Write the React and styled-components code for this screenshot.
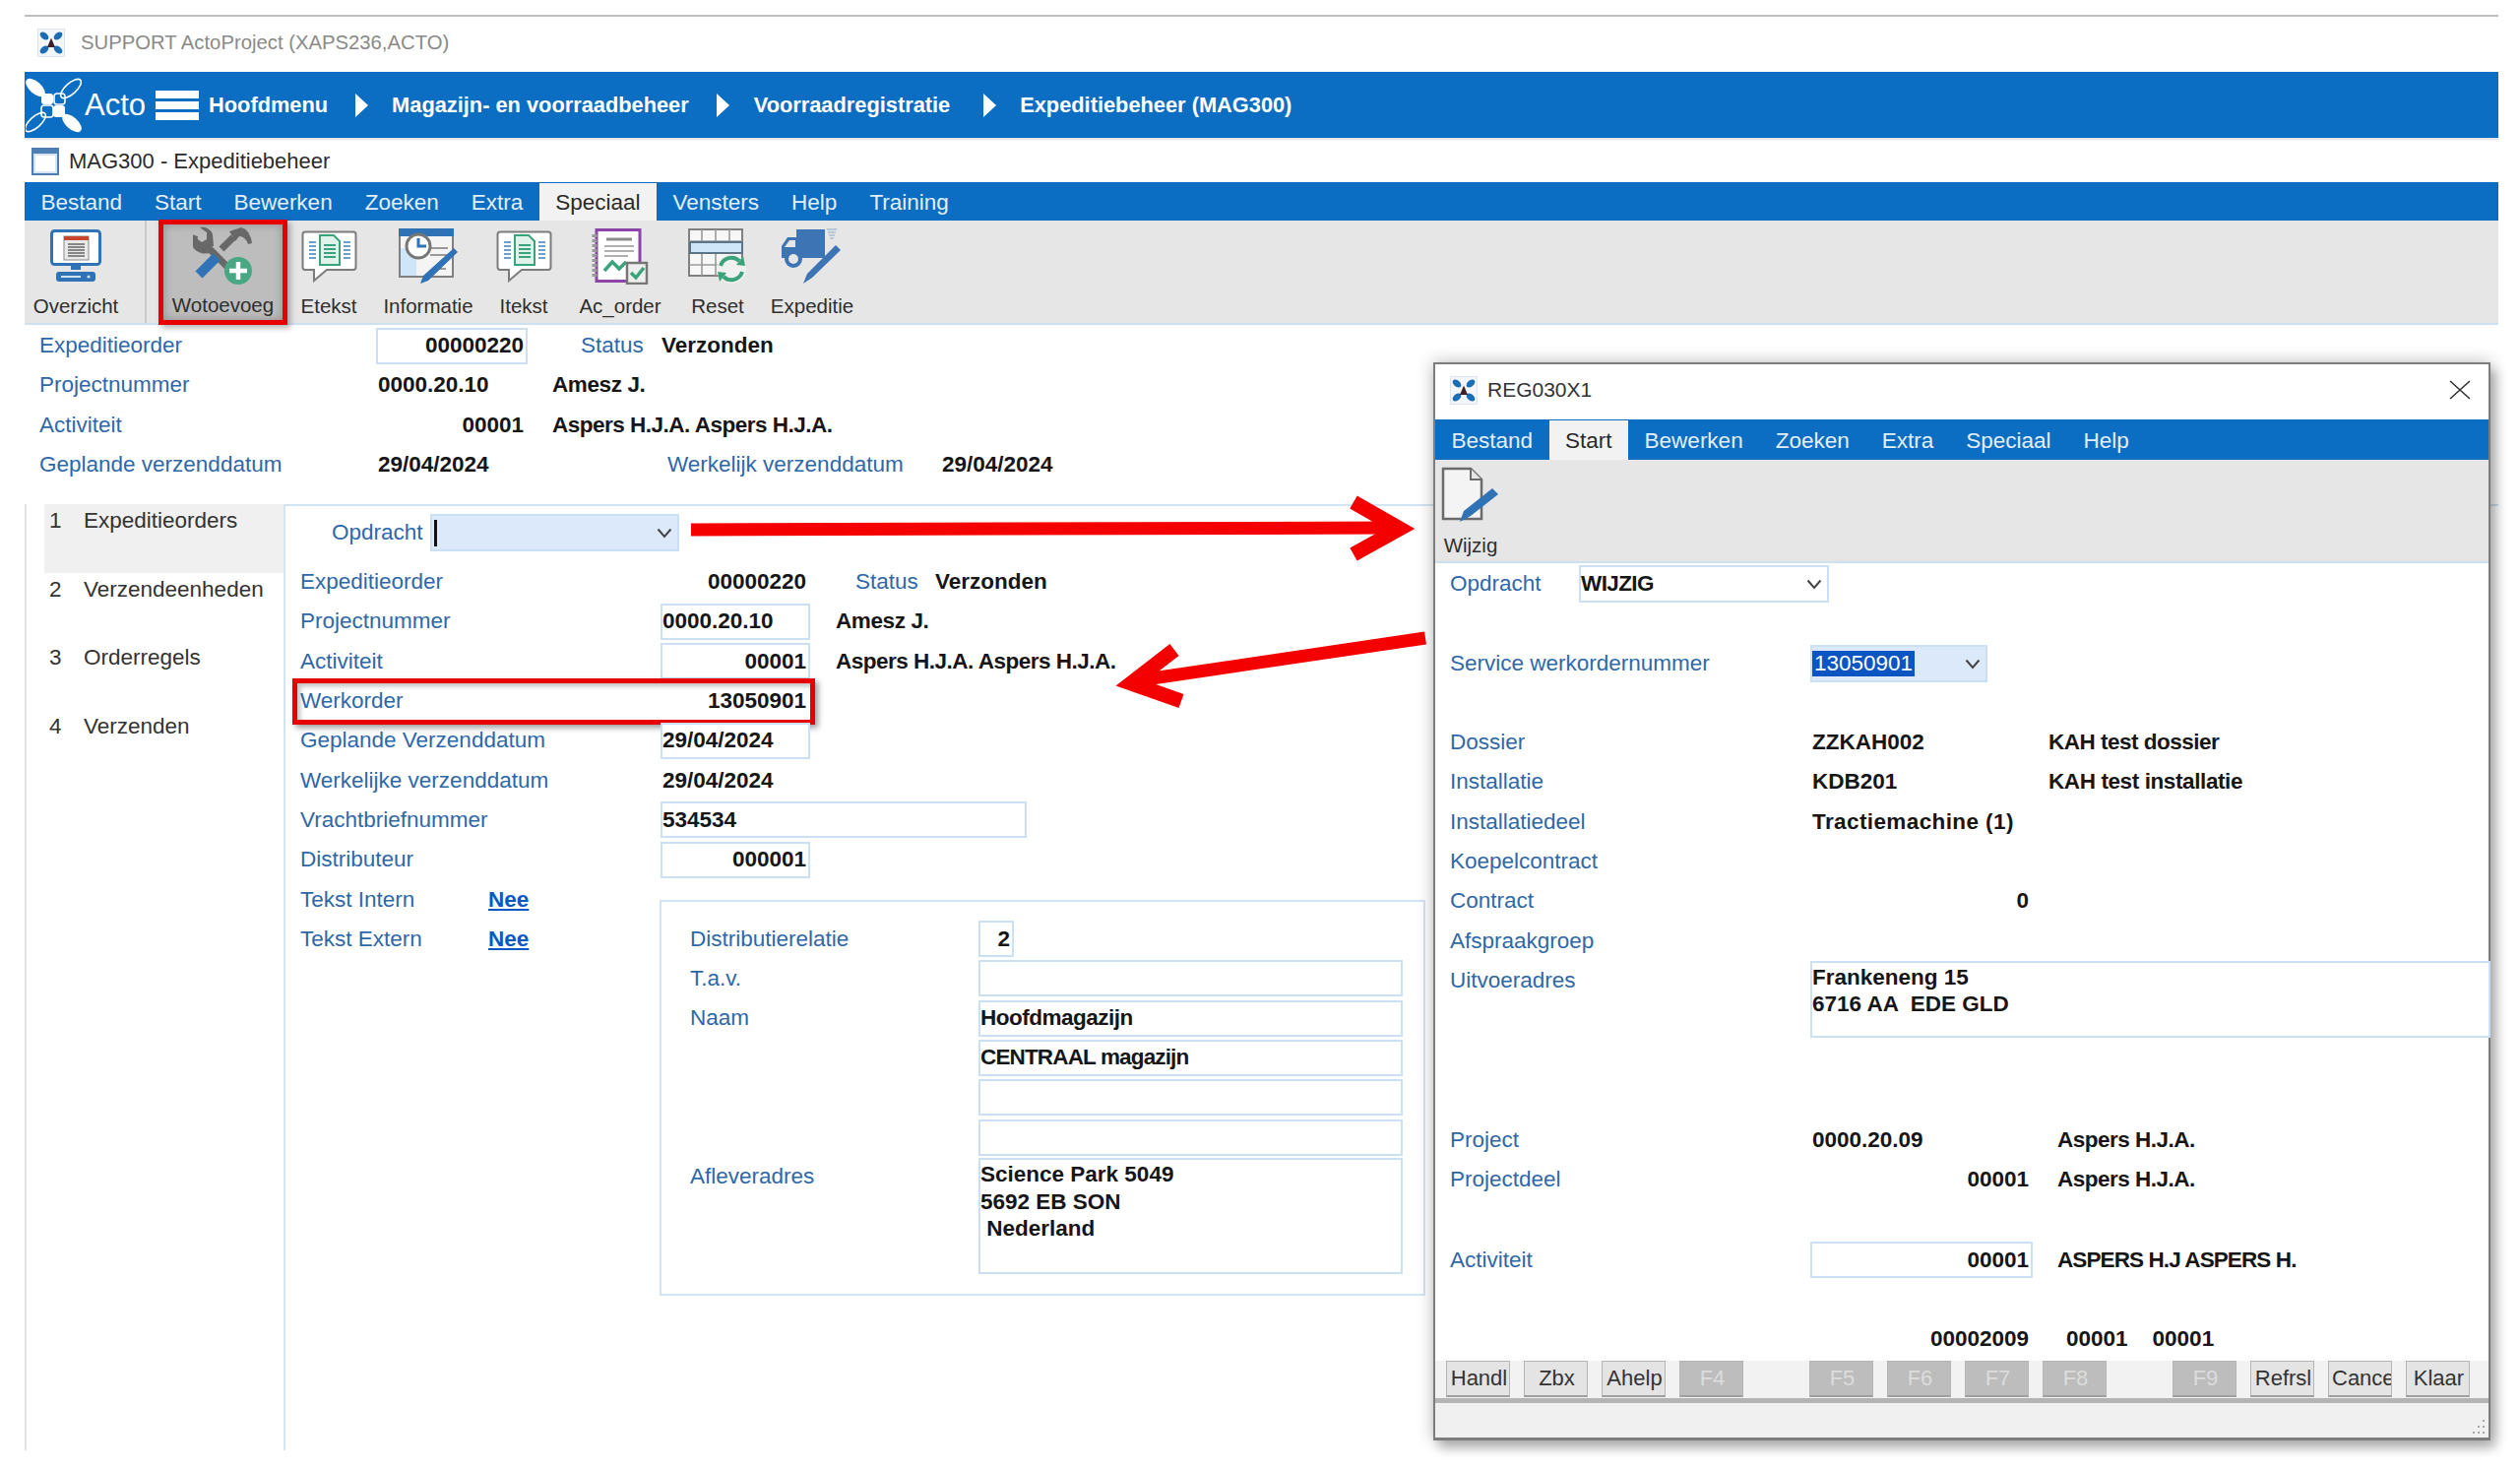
import React from "react";
import styled, { createGlobalStyle } from "styled-components";

const GlobalStyle = createGlobalStyle`
  html, body { margin: 0; padding: 0; background: #fff; }
  body { font-family: "Liberation Sans", Arial, sans-serif; }
  * { box-sizing: border-box; }
`;

const BLUE = "#0b6ec2";
const LABEL = "#2f68a8";
const FIELD_BORDER = "#cbe0f2";

/* ---------- page chrome ---------- */
const Page = styled.div`
  position: relative;
  width: 2560px;
  height: 1493px;
  padding: 15px 22px 0 25px;
  overflow: hidden;
`;

const AppTitle = styled.div`
  display: flex;
  align-items: center;
  gap: 16px;
  height: 58px;
  padding: 0 0 4px 13px;
  border-top: 2px solid #bdbdbd;
  color: #8a8a8a;
  font-size: 20.3px;
`;

const NavBar = styled.div`
  display: flex;
  align-items: center;
  height: 67px;
  background: ${BLUE};
  box-shadow: 0 2px 2px rgba(0, 0, 0, 0.12);
  color: #fff;
`;

const LogoWord = styled.span`
  margin: 0 10px 0 3px;
  font-size: 31px;
`;

const Crumb = styled.span`
  margin-left: ${(p) => p.$ml || 0}px;
  font-size: 21.8px;
  font-weight: bold;
  white-space: nowrap;
`;

const CrumbArrow = styled.span`
  width: 0;
  height: 0;
  margin-left: ${(p) => p.$ml || 28}px;
  border-top: 12px solid transparent;
  border-bottom: 12px solid transparent;
  border-left: 13px solid #fff;
`;

const Hamburger = styled.span`
  display: flex;
  flex-direction: column;
  justify-content: space-between;
  width: 44px;
  height: 30px;
  span { height: 8px; background: #fff; }
`;

const WindowTitle = styled.div`
  display: flex;
  align-items: center;
  gap: 10px;
  height: 45px;
  padding: 3px 0 0 7px;
  color: #2b2b2b;
  font-size: 22px;
`;

const WindowIcon = styled.span`
  width: 28px;
  height: 28px;
  border: 2px solid #4d7fb3;
  border-top-width: 6px;
  background: #fff;
  box-shadow: inset 0 0 0 2px #d5e3f2;
`;

const MenuBar = styled.div`
  display: flex;
  align-items: stretch;
  height: ${(p) => p.$h || 41}px;
  background: ${BLUE};
`;

const MenuItem = styled.span`
  display: flex;
  align-items: center;
  margin-top: ${(p) => (p.$active ? 1 : 0)}px;
  padding: 2px 16.5px 0;
  background: ${(p) => (p.$active ? "#f2f2f2" : "transparent")};
  color: ${(p) => (p.$active ? "#2a2a2a" : "#e3eef8")};
  font-size: 22.5px;
  white-space: nowrap;
`;

const Toolbar = styled.div`
  display: flex;
  align-items: stretch;
  height: ${(p) => p.$h || 106}px;
  background: #e6e6e6;
  border-bottom: 2px solid #cfe0ef;
`;

const Tool = styled.div`
  position: relative;
  display: flex;
  flex-direction: column;
  align-items: center;
  flex: none;
  width: ${(p) => p.$w}px;
  height: 106px;
  padding-top: 7px;
  color: #2e2e2e;
  font-size: 20.5px;
  ${(p) =>
    p.$active &&
    `
    height: 107px;
    margin-top: -1px;
    padding-top: 3px;
    border: 5px solid #e60000;
    background: #bdbdbd;
    box-shadow: inset 0 0 10px rgba(0, 0, 0, 0.25), 3px 3px 6px rgba(0, 0, 0, 0.3);
  `}
`;

const ToolIcon = styled.div`
  display: flex;
  align-items: center;
  justify-content: center;
  height: 58px;
`;

const ToolLabel = styled.span`
  margin-top: ${(p) => p.$mt ?? 9}px;
  line-height: 26px;
  white-space: nowrap;
`;

const ToolSeparator = styled.span`
  width: 2px;
  margin: 0 12px 0 18px;
  background: #c9c9c9;
`;

/* ---------- form parts ---------- */
const Row = styled.div`
  position: relative;
  display: flex;
  align-items: ${(p) => (p.$top ? "flex-start" : "center")};
  width: ${(p) => (p.$fit ? "fit-content" : "auto")};
  height: ${(p) => (p.$auto ? "auto" : `${p.$h || 40.3}px`)};
  margin-top: ${(p) => p.$mt || 0}px;
  font-size: 22.5px;
  ${(p) =>
    p.$marked &&
    `
    &::after {
      content: "";
      position: absolute;
      inset: -3px -5px -4px -8px;
      border: 5px solid #e60000;
      box-shadow: 3px 3px 6px rgba(0, 0, 0, 0.4), inset 3px 3px 5px rgba(0, 0, 0, 0.25);
      pointer-events: none;
    }
  `}
`;

const Label = styled.span`
  flex: none;
  width: ${(p) => p.$w}px;
  margin-left: ${(p) => p.$ml || 0}px;
  margin-top: ${(p) => p.$mt || 0}px;
  color: ${LABEL};
  white-space: nowrap;
`;

const Value = styled.span`
  flex: none;
  margin-left: ${(p) => p.$ml || 0}px;
  color: #161616;
  font-weight: bold;
  letter-spacing: ${(p) => p.$ls || 0}px;
  white-space: nowrap;
`;

const Field = styled.div`
  flex: none;
  display: flex;
  align-items: center;
  justify-content: ${(p) => (p.$right ? "flex-end" : "flex-start")};
  width: ${(p) => p.$w}px;
  height: ${(p) => p.$h || 37}px;
  padding: 0 2px 0 0;
  border: 2px solid ${(p) => (p.$plain ? "transparent" : FIELD_BORDER)};
  background: ${(p) => (p.$plain ? "transparent" : "#fff")};
  color: #161616;
  font-weight: bold;
  letter-spacing: ${(p) => p.$ls || 0}px;
  white-space: nowrap;
`;

const TextField = styled(Field)`
  display: block;
  padding-top: 1px;
  line-height: 27.5px;
  white-space: pre;
`;

const Select = styled(Field)`
  justify-content: space-between;
  height: 38px;
  padding-right: 5px;
  background: ${(p) => (p.$focus ? "#dbe9fb" : "#fff")};
`;

const Caret = styled.span`
  width: 3px;
  height: 27px;
  margin-left: 2px;
  background: #111;
`;

const Selected = styled.span`
  padding: 0 2px;
  background: #0b55c2;
  color: #fff;
  font-weight: normal;
`;

const Link = styled.a`
  color: #0b57c4;
  font-weight: bold;
  text-decoration: underline;
`;

const HeaderForm = styled.div`
  height: 182px;
  padding: 1px 0 0 15px;
`;

const Body = styled.div`
  display: flex;
  height: 961px;
  border-left: 2px solid #e3e3e3;
`;

const TabList = styled.div`
  flex: none;
  width: 261px;
  padding-left: 18px;
`;

const Tab = styled.div`
  display: flex;
  height: 69.6px;
  padding: 4px 0 0 5px;
  background: ${(p) => (p.$active ? "#f0f0f0" : "transparent")};
  color: #333;
  font-size: 22.5px;
  span:first-child { width: 35px; }
`;

const Panel = styled.div`
  flex: 1;
  padding: 8px 0 0 15px;
  border-left: 2px solid #d3e4f3;
  border-top: 2px solid #d3e4f3;
`;

const LowerPart = styled.div`
  display: flex;
  align-items: flex-start;
`;

const TextRows = styled.div`
  flex: none;
  width: 365px;
`;

const SubPanel = styled.div`
  width: 778px;
  height: 402px;
  margin-top: 21px;
  padding: 17px 0 0 29px;
  border: 2px solid #d3e4f3;
`;

/* ---------- dialog ---------- */
const Dialog = styled.div`
  position: absolute;
  left: 1456px;
  top: 368px;
  display: flex;
  flex-direction: column;
  width: 1074px;
  height: 1095px;
  border: 2px solid #7d7d7d;
  border-bottom-width: 3px;
  background: #fff;
  box-shadow: 0 0 16px rgba(0, 0, 0, 0.28), 6px 8px 10px rgba(0, 0, 0, 0.22);
`;

const DialogTitle = styled.div`
  display: flex;
  align-items: center;
  gap: 10px;
  height: 56px;
  padding: 0 18px 4px 15px;
  color: #333;
  font-size: 21px;
`;

const CloseIcon = styled.svg`
  margin-left: auto;
`;

const DialogForm = styled.div`
  flex: 1;
  padding: 2px 0 0 15px;
`;

const ButtonStrip = styled.div`
  display: flex;
  gap: 14px;
  height: 38px;
  padding-left: 11px;
  background: #f2f2f2;
`;

const FnButton = styled.span`
  flex: none;
  display: flex;
  align-items: center;
  justify-content: safe center;
  width: 65px;
  height: 37px;
  padding: 0 1px 0 3px;
  overflow: hidden;
  border: 1px solid #b5b5b5;
  border-bottom: 2px solid #9f9f9f;
  background: ${(p) => (p.$off ? "#bdbdbd" : "#e4e4e4")};
  color: ${(p) => (p.$off ? "#dcdcdc" : "#333")};
  font-size: 22px;
  white-space: nowrap;
`;

const StripGap = styled.span`
  flex: none;
  width: 39px;
`;

const StatusBar = styled.div`
  position: relative;
  height: 40px;
  border-top: 5px solid #b4b4b4;
  background: #f0f0f0;
`;

const Grip = styled.svg`
  position: absolute;
  right: 2px;
  bottom: 2px;
`;

const ArrowLayer = styled.svg`
  position: absolute;
  left: 0;
  top: 0;
  pointer-events: none;
`;

/* ---------- drawings ---------- */
const Chevron = () => (
  <svg width="16" height="11" viewBox="0 0 16 11">
    <polyline points="1.5,1.5 8,9 14.5,1.5" fill="none" stroke="#444" strokeWidth="2" />
  </svg>
);

const ActoTile = () => (
  <svg width="28" height="29" viewBox="0 0 28 29">
    <rect x="0.5" y="0.5" width="27" height="28" fill="#f3f6fb" stroke="#dfe4ec" />
    <g fill="#1d6db5">
      <ellipse cx="7" cy="7.5" rx="5" ry="3.2" transform="rotate(40 7 7.5)" />
      <ellipse cx="21" cy="7.5" rx="5" ry="3.2" transform="rotate(-40 21 7.5)" />
      <ellipse cx="7" cy="21.5" rx="5" ry="3.2" transform="rotate(-40 7 21.5)" />
      <ellipse cx="21" cy="21.5" rx="5" ry="3.2" transform="rotate(40 21 21.5)" />
    </g>
    <polygon points="14,9.5 18,19 10,19" fill="#3d2028" />
  </svg>
);

const ActoLogo = () => (
  <svg width="57" height="56" viewBox="0 0 57 56" style={{ marginLeft: 1 }}>
    <ellipse cx="10" cy="10" rx="12" ry="6" fill="#fff" transform="rotate(42 10 10)" />
    <ellipse cx="47" cy="46" rx="12" ry="6" fill="#fff" transform="rotate(42 47 46)" />
    <ellipse cx="46" cy="11" rx="13" ry="5.5" fill="none" stroke="#fff" strokeWidth="1.6" transform="rotate(-42 46 11)" />
    <ellipse cx="10" cy="45" rx="13" ry="5.5" fill="none" stroke="#fff" strokeWidth="1.6" transform="rotate(-42 10 45)" />
    <rect x="16" y="16" width="12" height="11" rx="3" fill="#fff" />
    <rect x="29" y="16" width="11" height="11" rx="3" fill="none" stroke="#fff" strokeWidth="1.6" />
    <rect x="16" y="28" width="12" height="12" rx="3" fill="none" stroke="#fff" strokeWidth="1.6" />
    <rect x="28" y="28" width="12" height="12" rx="3" fill="#fff" />
  </svg>
);

const MonitorIcon = () => (
  <svg width="52" height="54" viewBox="0 0 52 54">
    <rect x="1.5" y="1.5" width="49" height="34" rx="3" fill="#fff" stroke="#2f72b5" strokeWidth="3" />
    <rect x="14" y="7" width="25" height="24" fill="#e9e9e9" stroke="#8a8a8a" />
    <rect x="14" y="7" width="25" height="4" fill="#c8452f" />
    <path d="M18 15h17M18 18h17M18 21h17M18 24h17M18 27h17" stroke="#666" strokeWidth="1.5" />
    <rect x="21" y="36" width="10" height="5" fill="#2f72b5" />
    <rect x="6" y="43" width="40" height="10" rx="3" fill="#2f72b5" />
    <rect x="11" y="47" width="20" height="2" fill="#cfe0f2" />
    <circle cx="39" cy="48" r="1.6" fill="#cfe0f2" />
  </svg>
);

const ToolsIcon = () => (
  <svg width="62" height="60" viewBox="0 0 62 60">
    <path d="M2 9 A11 11 0 0 0 17 23 L38 44" fill="none" stroke="#686868" strokeWidth="7" />
    <path d="M2 11 L9 16 L14 13 L14 6 L7 1 A11 11 0 0 1 20 8 L21 20 L12 22 L3 18 Z" fill="#686868" />
    <path d="M37 5 L49 1 Q58 3 60 17 L56 18 Q53 10 47 10 L43 15 Z" fill="#686868" />
    <line x1="41" y1="11" x2="29" y2="23" stroke="#686868" strokeWidth="7" />
    <line x1="24" y1="31" x2="6" y2="49" stroke="#2f72b5" strokeWidth="10" />
    <circle cx="46" cy="45" r="14" fill="#48a884" />
    <path d="M46 36v18M37 45h18" stroke="#fff" strokeWidth="4.5" />
  </svg>
);

const BubbleIcon = () => (
  <svg width="57" height="53" viewBox="0 0 57 53">
    <path d="M4 1.5H53Q55.5 1.5 55.5 4V37Q55.5 40 53 40H26L13 51V40H4Q1.5 40 1.5 37V4Q1.5 1.5 4 1.5Z" fill="#fff" stroke="#7c7c7c" strokeWidth="2" />
    <path d="M19 5H33L39 11V35H19Z" fill="#dff3ea" stroke="#3ba37c" strokeWidth="2" />
    <path d="M23 15h12M23 19h12M23 23h12M23 27h12" stroke="#3ba37c" strokeWidth="2" />
    <path d="M8 12h7M8 16h7M8 20h7M8 24h7M8 28h7M43 12h7M43 16h7M43 20h7M43 24h7M43 28h7" stroke="#6d9fd0" strokeWidth="2" />
  </svg>
);

const InfoIcon = () => (
  <svg width="60" height="57" viewBox="0 0 60 57">
    <rect x="1" y="1" width="54" height="48" fill="#f4f4f4" stroke="#808080" strokeWidth="2" />
    <rect x="0" y="0" width="56" height="8" fill="#2f72b5" />
    <rect x="2" y="20" width="16" height="28" fill="#cfe6f8" />
    <path d="M32 20h18M32 27h18M36 41h12" stroke="#9a9a9a" strokeWidth="2" />
    <circle cx="20" cy="18" r="12" fill="#fff" stroke="#777" strokeWidth="3" />
    <path d="M20 10v8h8" fill="none" stroke="#2f72b5" strokeWidth="3" />
    <path d="M56 20L60 24L30 53L22 56L25 48Z" fill="#2f72b5" />
  </svg>
);

const OrderIcon = () => (
  <svg width="58" height="57" viewBox="0 0 58 57">
    <rect x="5" y="1.5" width="44" height="52" fill="#fff" stroke="#8c44a8" strokeWidth="3" />
    <path d="M3 6v44" stroke="#9a9a9a" strokeWidth="5" strokeDasharray="3 2" />
    <path d="M15 11h26" stroke="#8c8c8c" strokeWidth="3" />
    <path d="M13 18h30M13 23h30M13 28h24" stroke="#b0b0b0" strokeWidth="2" />
    <path d="M13 43l8-9 7 7 7-7" fill="none" stroke="#3ba37c" strokeWidth="3.5" />
    <rect x="36" y="35" width="20" height="21" fill="#eee" stroke="#777" strokeWidth="2.5" />
    <path d="M40 45l5 5 8-10" fill="none" stroke="#3ba37c" strokeWidth="3.5" />
  </svg>
);

const ResetIcon = () => (
  <svg width="60" height="57" viewBox="0 0 60 57">
    <rect x="1" y="1" width="54" height="47" fill="#f7f7f7" stroke="#808080" strokeWidth="2" />
    <path d="M14 1v47M28 1v47M42 1v47M1 13h54M1 37h54" stroke="#9a9a9a" strokeWidth="1.6" />
    <rect x="2" y="14" width="53" height="11" fill="#cfe6f8" stroke="#5b7486" strokeWidth="2" />
    <circle cx="44" cy="41" r="15" fill="#f0f0f0" />
    <path d="M33 38A11.5 11.5 0 0 1 52 33M55 44A11.5 11.5 0 0 1 36 49" fill="none" stroke="#3ba37c" strokeWidth="4" />
    <path d="M49 37L58 38L56 28ZM39 45L30 44L32 54Z" fill="#3ba37c" />
  </svg>
);

const TruckIcon = () => (
  <svg width="62" height="57" viewBox="0 0 62 57">
    <path d="M15 1H44V30H0V18L6 9H15Z" fill="#3d74b3" />
    <path d="M8 12H14V19H3Z" fill="#e6e6e6" />
    <circle cx="12" cy="31" r="7" fill="#e6e6e6" stroke="#3d74b3" strokeWidth="4" />
    <path d="M46 1h10M47 4h8M48 7h6M49 10h4" stroke="#a9bfd5" strokeWidth="1.5" />
    <path d="M55 17L60 22L31 50L22 56L26 46Z" fill="#3d74b3" />
  </svg>
);

const WijzigIcon = () => (
  <svg width="60" height="58" viewBox="0 0 60 58">
    <path d="M2 2H30L41 13V53H2Z" fill="#f4f4f4" stroke="#6b6b6b" strokeWidth="2.5" />
    <path d="M30 2V13H41" fill="#e6e6e6" stroke="#6b6b6b" strokeWidth="2" />
    <path d="M52 22L58 28L30 50L19 56L23 45Z" fill="#2f72b5" />
  </svg>
);

const Arrows = () => (
  <ArrowLayer width="2560" height="1493" viewBox="0 0 2560 1493">
    <g fill="none" stroke="#f50000">
      <line x1="702" y1="538" x2="1415" y2="536" strokeWidth="13" />
      <polyline points="1375,510 1422,537 1375,563" strokeWidth="15" />
      <line x1="1448" y1="648" x2="1150" y2="692" strokeWidth="13" />
      <polyline points="1193,660 1149,694 1200,712" strokeWidth="15" />
    </g>
  </ArrowLayer>
);

const mainMenu = ["Bestand", "Start", "Bewerken", "Zoeken", "Extra", "Speciaal", "Vensters", "Help", "Training"];
const dialogMenu = ["Bestand", "Start", "Bewerken", "Zoeken", "Extra", "Speciaal", "Help"];

const tools = [
  { label: "Etekst", w: 84, icon: <BubbleIcon /> },
  { label: "Informatie", w: 118, icon: <InfoIcon /> },
  { label: "Itekst", w: 76, icon: <BubbleIcon /> },
  { label: "Ac_order", w: 120, icon: <OrderIcon /> },
  { label: "Reset", w: 78, icon: <ResetIcon /> },
  { label: "Expeditie", w: 114, icon: <TruckIcon /> },
];

const tabs = ["Expeditieorders", "Verzendeenheden", "Orderregels", "Verzenden"];

const App = () => (
  <Page>
    <GlobalStyle />
    <AppTitle>
      <ActoTile />
      SUPPORT ActoProject (XAPS236,ACTO)
    </AppTitle>

    <NavBar>
      <ActoLogo />
      <LogoWord>Acto</LogoWord>
      <Hamburger>
        <span />
        <span />
        <span />
      </Hamburger>
      <Crumb $ml={10}>Hoofdmenu</Crumb>
      <CrumbArrow />
      <Crumb $ml={24}>Magazijn- en voorraadbeheer</Crumb>
      <CrumbArrow />
      <Crumb $ml={25}>Voorraadregistratie</Crumb>
      <CrumbArrow $ml={34} />
      <Crumb $ml={24}>Expeditiebeheer (MAG300)</Crumb>
    </NavBar>

    <WindowTitle>
      <WindowIcon />
      MAG300 - Expeditiebeheer
    </WindowTitle>

    <MenuBar $h={39}>
      {mainMenu.map((item) => (
        <MenuItem key={item} $active={item === "Speciaal"}>
          {item}
        </MenuItem>
      ))}
    </MenuBar>

    <Toolbar>
      <Tool $w={104}>
        <ToolIcon>
          <MonitorIcon />
        </ToolIcon>
        <ToolLabel>Overzicht</ToolLabel>
      </Tool>
      <ToolSeparator />
      <Tool $w={131} $active>
        <ToolIcon>
          <ToolsIcon />
        </ToolIcon>
        <ToolLabel $mt={8}>Wotoevoeg</ToolLabel>
      </Tool>
      {tools.map((tool) => (
        <Tool key={tool.label} $w={tool.w}>
          <ToolIcon>{tool.icon}</ToolIcon>
          <ToolLabel>{tool.label}</ToolLabel>
        </Tool>
      ))}
    </Toolbar>

    <HeaderForm>
      <Row>
        <Label $w={342}>Expeditieorder</Label>
        <Field $w={154} $right>00000220</Field>
        <Label $w={82} $ml={54}>Status</Label>
        <Value>Verzonden</Value>
      </Row>
      <Row>
        <Label $w={342}>Projectnummer</Label>
        <Field $w={154} $plain>0000.20.10</Field>
        <Value $ml={25} $ls={-0.4}>Amesz J.</Value>
      </Row>
      <Row>
        <Label $w={342}>Activiteit</Label>
        <Field $w={154} $plain $right>00001</Field>
        <Value $ml={25} $ls={-0.5}>Aspers H.J.A. Aspers H.J.A.</Value>
      </Row>
      <Row>
        <Label $w={342}>Geplande verzenddatum</Label>
        <Field $w={154} $plain>29/04/2024</Field>
        <Label $w={279} $ml={142}>Werkelijk verzenddatum</Label>
        <Value>29/04/2024</Value>
      </Row>
    </HeaderForm>

    <Body>
      <TabList>
        {tabs.map((tab, i) => (
          <Tab key={tab} $active={i === 0}>
            <span>{i + 1}</span>
            <span>{tab}</span>
          </Tab>
        ))}
      </TabList>

      <Panel>
        <Row $h={38}>
          <Label $w={100} $ml={32}>Opdracht</Label>
          <Select $w={253} $focus>
            <Caret />
            <Chevron />
          </Select>
        </Row>
        <Row $mt={11}>
          <Label $w={366}>Expeditieorder</Label>
          <Field $w={152} $plain $right>00000220</Field>
          <Label $w={81} $ml={46}>Status</Label>
          <Value>Verzonden</Value>
        </Row>
        <Row>
          <Label $w={366}>Projectnummer</Label>
          <Field $w={152}>0000.20.10</Field>
          <Value $ml={26} $ls={-0.4}>Amesz J.</Value>
        </Row>
        <Row>
          <Label $w={366}>Activiteit</Label>
          <Field $w={152} $right>00001</Field>
          <Value $ml={26} $ls={-0.5}>Aspers H.J.A. Aspers H.J.A.</Value>
        </Row>
        <Row $fit $marked>
          <Label $w={366}>Werkorder</Label>
          <Field $w={152} $plain $right>13050901</Field>
        </Row>
        <Row>
          <Label $w={366}>Geplande Verzenddatum</Label>
          <Field $w={152}>29/04/2024</Field>
        </Row>
        <Row>
          <Label $w={366}>Werkelijke verzenddatum</Label>
          <Field $w={152} $plain>29/04/2024</Field>
        </Row>
        <Row>
          <Label $w={366}>Vrachtbriefnummer</Label>
          <Field $w={372}>534534</Field>
        </Row>
        <Row>
          <Label $w={366}>Distributeur</Label>
          <Field $w={152} $right>000001</Field>
        </Row>

        <LowerPart>
          <TextRows>
            <Row>
              <Label $w={191}>Tekst Intern</Label>
              <Link>Nee</Link>
            </Row>
            <Row>
              <Label $w={191}>Tekst Extern</Label>
              <Link>Nee</Link>
            </Row>
          </TextRows>
          <SubPanel>
            <Row>
              <Label $w={293}>Distributierelatie</Label>
              <Field $w={36} $right>2</Field>
            </Row>
            <Row>
              <Label $w={293}>T.a.v.</Label>
              <Field $w={431} />
            </Row>
            <Row>
              <Label $w={293}>Naam</Label>
              <Field $w={431} $ls={-0.5}>Hoofdmagazijn</Field>
            </Row>
            <Row>
              <Label $w={293} />
              <Field $w={431} $ls={-0.85}>CENTRAAL magazijn</Field>
            </Row>
            <Row>
              <Label $w={293} />
              <Field $w={431} />
            </Row>
            <Row>
              <Label $w={293} />
              <Field $w={431} />
            </Row>
            <Row $auto $top $mt={1}>
              <Label $w={293} $mt={6}>Afleveradres</Label>
              <TextField $w={431} $h={118}>{"Science Park 5049\n5692 EB SON\n Nederland"}</TextField>
            </Row>
          </SubPanel>
        </LowerPart>
      </Panel>
    </Body>

    <Arrows />

    <Dialog>
      <DialogTitle>
        <ActoTile />
        REG030X1
        <CloseIcon width="22" height="20" viewBox="0 0 22 20">
          <path d="M1 1L21 19M21 1L1 19" stroke="#333" strokeWidth="1.6" />
        </CloseIcon>
      </DialogTitle>

      <MenuBar>
        {dialogMenu.map((item) => (
          <MenuItem key={item} $active={item === "Start"}>
            {item}
          </MenuItem>
        ))}
      </MenuBar>

      <Toolbar $h={105}>
        <Tool $w={72}>
          <ToolIcon>
            <WijzigIcon />
          </ToolIcon>
          <ToolLabel $mt={9}>Wijzig</ToolLabel>
        </Tool>
      </Toolbar>

      <DialogForm>
        <Row $h={38}>
          <Label $w={131}>Opdracht</Label>
          <Select $w={254} $ls={-0.6}>
            WIJZIG
            <Chevron />
          </Select>
        </Row>
        <Row $h={38} $mt={43}>
          <Label $w={366}>Service werkordernummer</Label>
          <Select $w={180} $focus>
            <Selected>13050901</Selected>
            <Chevron />
          </Select>
        </Row>
        <Row $mt={41}>
          <Label $w={366}>Dossier</Label>
          <Field $w={226} $plain>ZZKAH002</Field>
          <Value $ml={16} $ls={-0.5}>KAH test dossier</Value>
        </Row>
        <Row>
          <Label $w={366}>Installatie</Label>
          <Field $w={226} $plain>KDB201</Field>
          <Value $ml={16} $ls={-0.4}>KAH test installatie</Value>
        </Row>
        <Row>
          <Label $w={366}>Installatiedeel</Label>
          <Field $w={226} $plain $ls={0.4}>Tractiemachine (1)</Field>
        </Row>
        <Row>
          <Label $w={366}>Koepelcontract</Label>
        </Row>
        <Row>
          <Label $w={366}>Contract</Label>
          <Field $w={226} $plain $right>0</Field>
        </Row>
        <Row>
          <Label $w={366}>Afspraakgroep</Label>
        </Row>
        <Row $auto $top>
          <Label $w={366} $mt={7}>Uitvoeradres</Label>
          <TextField $w={691} $h={78}>{"Frankeneng 15\n6716 AA  EDE GLD"}</TextField>
        </Row>
        <Row $mt={84}>
          <Label $w={366}>Project</Label>
          <Field $w={226} $plain>0000.20.09</Field>
          <Value $ml={25} $ls={-0.5}>Aspers H.J.A.</Value>
        </Row>
        <Row>
          <Label $w={366}>Projectdeel</Label>
          <Field $w={226} $plain $right>00001</Field>
          <Value $ml={25} $ls={-0.5}>Aspers H.J.A.</Value>
        </Row>
        <Row $mt={41}>
          <Label $w={366}>Activiteit</Label>
          <Field $w={226} $right>00001</Field>
          <Value $ml={25} $ls={-0.9}>ASPERS H.J ASPERS H.</Value>
        </Row>
        <Row $mt={40}>
          <Label $w={366} />
          <Field $w={226} $plain $right>00002009</Field>
          <Value $ml={34}>00001</Value>
          <Value $ml={25}>00001</Value>
        </Row>
      </DialogForm>

      <ButtonStrip>
        <FnButton>Handl</FnButton>
        <FnButton>Zbx</FnButton>
        <FnButton>Ahelp</FnButton>
        <FnButton $off>F4</FnButton>
        <StripGap />
        <FnButton $off>F5</FnButton>
        <FnButton $off>F6</FnButton>
        <FnButton $off>F7</FnButton>
        <FnButton $off>F8</FnButton>
        <StripGap />
        <FnButton $off>F9</FnButton>
        <FnButton>Refrsl</FnButton>
        <FnButton>Cance</FnButton>
        <FnButton>Klaar</FnButton>
      </ButtonStrip>

      <StatusBar>
        <Grip width="14" height="18" viewBox="0 0 14 18" fill="#a8a8a8">
          <rect x="10" y="2" width="2" height="2" />
          <rect x="10" y="8" width="2" height="2" />
          <rect x="5" y="8" width="2" height="2" />
          <rect x="10" y="14" width="2" height="2" />
          <rect x="5" y="14" width="2" height="2" />
          <rect x="0" y="14" width="2" height="2" />
        </Grip>
      </StatusBar>
    </Dialog>
  </Page>
);

export default App;
